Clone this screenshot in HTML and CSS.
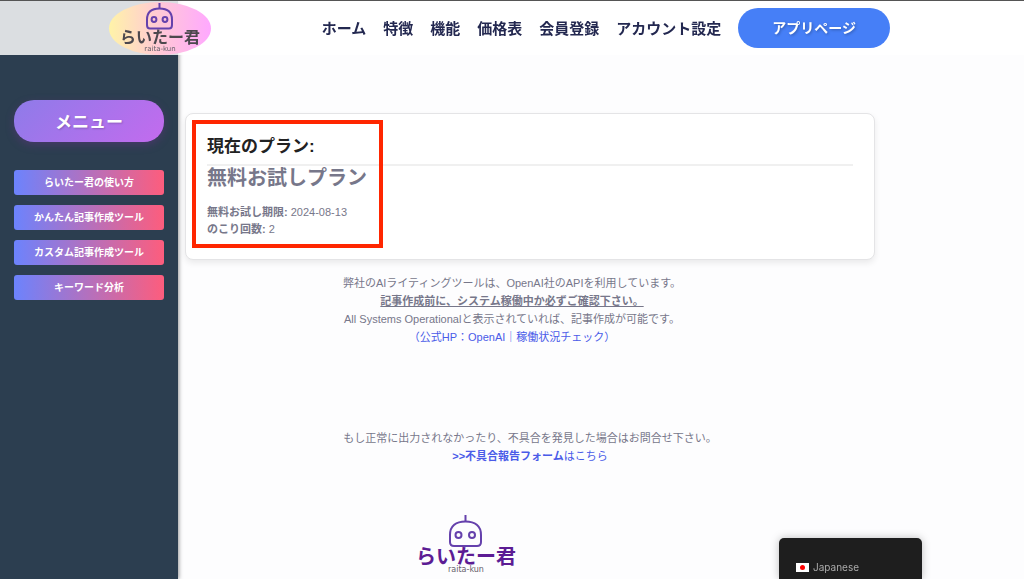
FILE: index.html
```html
<!DOCTYPE html>
<html lang="ja">
<head>
<meta charset="utf-8">
<meta name="viewport" content="width=device-width, initial-scale=1">
<title>らいたー君</title>
<link rel="stylesheet" href="styles.css">
</head>
<body>
<header class="header">
  <a class="brand" href="#" aria-label="らいたー君">
    <svg class="brand-logo" viewBox="0 0 102 53">
      <g class="robot">
        <path d="M50.500 6V1"/>
        <path d="M38 23V17.500C38 10.500 42.500 6.500 50.500 6.500S63 10.500 63 17.500V23Q63 26.500 60 26.500H41Q38 26.500 38 23Z"/>
        <circle cx="45" cy="17.500" r="2.400"/>
        <circle cx="56" cy="17.500" r="2.400"/>
      </g>
      <text class="logo-name" x="51" y="41" font-size="16">らいたー君</text>
      <text class="logo-sub" x="51" y="49" font-size="7">raita-kun</text>
    </svg>
  </a>
  <nav class="nav">
    <a href="#">ホーム</a>
    <a href="#">特徴</a>
    <a href="#">機能</a>
    <a href="#">価格表</a>
    <a href="#">会員登録</a>
    <a href="#">アカウント設定</a>
    <a class="app-button" href="#">アプリページ</a>
  </nav>
</header>

<div class="layout">
  <aside class="sidebar">
    <button class="menu-button" type="button">メニュー</button>
    <nav class="tools">
      <a href="#">らいたー君の使い方</a>
      <a href="#">かんたん記事作成ツール</a>
      <a href="#">カスタム記事作成ツール</a>
      <a href="#">キーワード分析</a>
    </nav>
  </aside>

  <main class="main">
    <section class="card">
      <h2 class="card-title">現在のプラン:</h2>
      <p class="plan-name">無料お試しプラン</p>
      <p class="plan-info"><strong>無料お試し期限:</strong> 2024-08-13<br><strong>のこり回数:</strong> 2</p>
      <div class="highlight"></div>
    </section>
    <p class="note note-status">
      弊社のAIライティングツールは、OpenAI社のAPIを利用しています。<br>
      <strong class="underlined">記事作成前に、システム稼働中か必ずご確認下さい。</strong><br>
      All Systems Operationalと表示されていれば、記事作成が可能です。<br>
      <a href="#">（公式HP：OpenAI｜稼働状況チェック）</a>
    </p>
    <p class="note note-report">
      もし正常に出力されなかったり、不具合を発見した場合はお問合せ下さい。<br>
      <a href="#"><strong>&gt;&gt;不具合報告フォーム</strong>はこちら</a>
    </p>
    <footer class="footer">
      <svg class="footer-logo" viewBox="0 0 104 60" role="img" aria-label="らいたー君">
        <g class="robot">
          <path d="M50.500 7V1"/>
          <path d="M35 28V21C35 12 41 7.500 50.500 7.500S66 12 66 21V28Q66 32 62 32H39Q35 32 35 28Z"/>
          <circle cx="43.500" cy="21" r="3"/>
          <circle cx="57" cy="21" r="3"/>
        </g>
        <text class="logo-name" x="51" y="50" font-size="20">らいたー君</text>
        <text class="logo-sub" x="51" y="58" font-size="8">raita-kun</text>
      </svg>
    </footer>
  </main>
</div>

<button class="language" type="button">
  <svg class="flag" viewBox="0 0 13 9"><rect width="13" height="9" fill="#fff"/><circle cx="6.500" cy="4.500" r="2.500" fill="#f00"/></svg>
  Japanese
</button>
</body>
</html>
```
FILE: styles.css
```css
* {
  box-sizing: border-box;
}

body {
  margin: 0;
  background: #fdfdfe;
  color: #77778a;
  font-family: "Liberation Sans", "Noto Sans CJK JP", sans-serif;
  font-size: 11px;
  line-height: 18px;
}

a {
  color: #4a5be8;
  text-decoration: none;
}

h2,
p {
  margin: 0;
}

.header {
  position: fixed;
  inset: 0 0 auto;
  z-index: 2;
  display: flex;
  align-items: center;
  justify-content: space-between;
  height: 55px;
  padding: 0 134px 0 109px;
  border-top: 1px solid #555;
  background: rgba(255, 255, 255, 0.83);
}

.brand {
  display: block;
  border-radius: 50%;
  background: linear-gradient(90deg, #fff3a8, #ffc8d6 50%, #ffa8ff);
}

.brand-logo {
  display: block;
  width: 102px;
  height: 53px;
}

.robot {
  fill: none;
  stroke: #6541ac;
  stroke-width: 2;
}

.logo-name,
.logo-sub {
  text-anchor: middle;
  font-family: "Noto Sans CJK JP", sans-serif;
}

.logo-name {
  fill: #4c484e;
  font-weight: 700;
}

.logo-sub {
  fill: #66606a;
  font-family: "DejaVu Sans", sans-serif;
}

.nav {
  display: flex;
  align-items: center;
  gap: 17px;
  font-size: 15px;
  font-weight: 700;
  white-space: nowrap;
}

.nav a {
  padding-top: 1px;
  color: #232850;
}

.nav .app-button {
  padding: 11px 34px;
  border-radius: 20px;
  background: #467ff7;
  color: #fff;
  font-size: 14px;
  text-shadow: 1px 1px 3px rgba(0, 0, 0, 0.3);
}

.layout {
  display: flex;
  min-height: 100vh;
}

.sidebar {
  flex: 0 0 178px;
  padding: 100px 14px 0;
  background: #2c3e50;
  box-shadow: 1px 0 4px rgba(0, 0, 0, 0.4);
}

.menu-button {
  display: block;
  width: 100%;
  padding: 12px;
  border: 0;
  border-radius: 20px;
  background: linear-gradient(135deg, #8e7be9, #c36bee);
  box-shadow: 0 3px 8px rgba(120, 50, 150, 0.35);
  color: #fff;
  font: 700 17px/18px "Noto Sans CJK JP", sans-serif;
  text-shadow: 1px 1px 2px rgba(0, 0, 0, 0.2);
}

.tools {
  display: grid;
  gap: 10px;
  margin-top: 28px;
}

.tools a {
  padding: 4px 0 3px;
  border-radius: 3px;
  background: linear-gradient(90deg, #6c83fd, #fd5d7d);
  color: #fff;
  font-size: 10px;
  font-weight: 700;
  text-align: center;
}

.main {
  flex: 1;
  padding: 113px 149px 0 7px;
}

.card {
  position: relative;
  padding: 22px 21px 21px;
  border: 1px solid #e4e4e6;
  border-radius: 8px;
  background: #fff;
  box-shadow: 0 3px 6px rgba(0, 0, 0, 0.08);
}

.card-title {
  padding-bottom: 6px;
  border-bottom: 2px solid #f0f0f0;
  color: #222;
  font-size: 17px;
  line-height: 22px;
}

.plan-name {
  margin-bottom: 14px;
  font-size: 20px;
  font-weight: 700;
  line-height: 24px;
}

.plan-info {
  line-height: 17px;
}

.highlight {
  position: absolute;
  top: 6px;
  left: 6px;
  width: 191px;
  height: 128px;
  border: 4px solid #ff2600;
}

.note {
  text-align: center;
}

.note-status {
  padding-right: 36px;
  margin-top: 14px;
}

.underlined {
  text-decoration: underline;
}

.note-report {
  margin-top: 83px;
}

.footer {
  padding: 49px 0 2px 230px;
}

.footer-logo {
  display: block;
  width: 104px;
  height: 60px;
}

.footer-logo .logo-name {
  fill: #5c1c94;
}

.language {
  position: fixed;
  right: 102px;
  bottom: 0;
  display: flex;
  align-items: center;
  gap: 4px;
  width: 143px;
  padding: 20px 17px 3px;
  border: 0;
  border-radius: 5px 5px 0 0;
  background: #1e1e1e;
  box-shadow: 0 0 8px rgba(0, 0, 0, 0.25);
  color: #aaa;
  font: 10px/18px Inter, sans-serif;
}

.flag {
  width: 13px;
  height: 9px;
}
```
